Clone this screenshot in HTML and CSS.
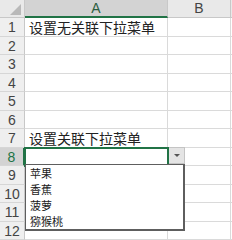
FILE: index.html
```html
<!DOCTYPE html>
<html lang="zh-CN">

<head>
	<meta charset="UTF-8">
	<meta name="viewport" content="width=device-width, initial-scale=1.0">
	<title>下拉菜单</title>
	<link rel="stylesheet" href="styles.css">
</head>

<body>

	<div class="sheet">
		<div class="corner"><span class="tri"></span></div>
		<div class="col-head selected">A</div>
		<div class="col-head">B</div>
		<div class="col-head edge"></div>

		<div class="row-head">1</div><div class="cell">设置无关联下拉菜单</div><div class="cell"></div><div class="cell edge"></div>
		<div class="row-head">2</div><div class="cell"></div><div class="cell"></div><div class="cell edge"></div>
		<div class="row-head">3</div><div class="cell"></div><div class="cell"></div><div class="cell edge"></div>
		<div class="row-head">4</div><div class="cell"></div><div class="cell"></div><div class="cell edge"></div>
		<div class="row-head">5</div><div class="cell"></div><div class="cell"></div><div class="cell edge"></div>
		<div class="row-head">6</div><div class="cell"></div><div class="cell"></div><div class="cell edge"></div>
		<div class="row-head">7</div><div class="cell">设置关联下拉菜单</div><div class="cell"></div><div class="cell edge"></div>
		<div class="row-head selected">8</div><div class="cell active"></div><div class="cell"></div><div class="cell edge"></div>
		<div class="row-head">9</div><div class="cell"></div><div class="cell"></div><div class="cell edge"></div>
		<div class="row-head">10</div><div class="cell"></div><div class="cell"></div><div class="cell edge"></div>
		<div class="row-head">11</div><div class="cell"></div><div class="cell"></div><div class="cell edge"></div>
		<div class="row-head">12</div><div class="cell"></div><div class="cell"></div><div class="cell edge"></div>

		<!-- data validation arrow + open list -->
		<div class="dd-btn"><span class="arrow"></span></div>
		<ul class="dd-list">
			<li>苹果</li>
			<li>香蕉</li>
			<li>菠萝</li>
			<li>猕猴桃</li>
		</ul>
	</div>

</body>

</html>
```

FILE: styles.css
```css
*,
*::before,
*::after {
	box-sizing: border-box;
}

body {
	margin: 0;
	padding: 0;
	background-color: white;
	font-family: "Noto Sans CJK SC", "Liberation Sans", sans-serif;
	color: #222;
}

.sheet {
	position: relative;
	width: 232px;
	height: 240px;
	overflow: hidden;
	display: grid;
	grid-template-columns: 25px 143px 63px 1fr;
	grid-template-rows: 18px repeat(12, 18.5px);
}

.corner {
	position: relative;
	background-color: #e9e9e9;
	border-right: 1px solid #c8c8c8;
	border-bottom: 1px solid #c8c8c8;
}

.corner .tri {
	position: absolute;
	right: 3px;
	bottom: 2px;
	width: 0;
	height: 0;
	border-left: 11px solid transparent;
	border-bottom: 11px solid #b9b9b9;
}

.col-head {
	background-color: #e9e9e9;
	border-right: 1px solid #c8c8c8;
	border-bottom: 1px solid #c8c8c8;
	font-family: "Liberation Sans", sans-serif;
	font-size: 14px;
	line-height: 17px;
	text-align: center;
	color: #444;
}

.col-head.selected {
	background-color: #d3d3d3;
	border-bottom: 2px solid #217346;
	color: #2b5e3f;
}

.col-head.edge {
	border-right: none;
}

.row-head {
	background-color: #efefef;
	border-right: 1px solid #c8c8c8;
	border-bottom: 1px solid #d6d6d6;
	font-family: "Liberation Sans", sans-serif;
	font-size: 14px;
	line-height: 18px;
	text-align: center;
	color: #444;
}

.row-head.selected {
	background-color: #d3d3d3;
	border-right: 2px solid #217346;
	color: #217346;
}

.cell {
	border-right: 1px solid #dadada;
	border-bottom: 1px solid #dadada;
	font-size: 14px;
	line-height: 18px;
	padding-left: 4px;
	white-space: nowrap;
	overflow: visible;
}

.cell.edge {
	border-right: none;
}

.cell.active {
	position: relative;
	outline: 2px solid #217346;
	outline-offset: -1px;
	z-index: 1;
}

.cell.active::after {
	content: "";
	position: absolute;
	right: -4px;
	bottom: -4px;
	width: 5px;
	height: 5px;
	background-color: #217346;
	border: 1px solid white;
}

.dd-btn {
	position: absolute;
	left: 168px;
	top: 147px;
	width: 17px;
	height: 17px;
	background-color: #e4e4e4;
	border: 1px solid #c4c4c4;
	display: flex;
	justify-content: center;
	align-items: center;
}

.dd-btn .arrow {
	width: 0;
	height: 0;
	border-left: 3px solid transparent;
	border-right: 3px solid transparent;
	border-top: 3px solid #555;
}

.dd-list {
	position: absolute;
	left: 25px;
	top: 164px;
	width: 160px;
	height: 67px;
	margin: 0;
	padding: 0 0 0 4px;
	list-style: none;
	background-color: white;
	border: 1px solid #5e5e5e;
	border-right-width: 2px;
	border-bottom-width: 2px;
	z-index: 2;
}

.dd-list li {
	font-size: 11px;
	line-height: 16px;
	color: #1a1a1a;
}
```
